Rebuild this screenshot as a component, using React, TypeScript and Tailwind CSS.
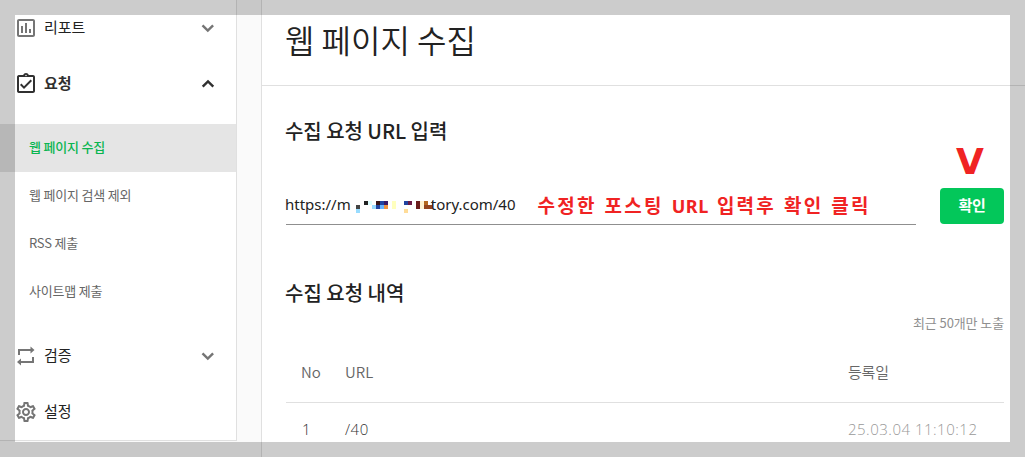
import type React from "react"

import { MdOutlineAssignmentTurnedIn, MdOutlineInsertChart, MdOutlineSettings } from "react-icons/md"

const requestMenu = ["웹 페이지 수집", "웹 페이지 검색 제외", "RSS 제출", "사이트맵 제출"]

// 4px blocks hiding part of the address: x, y, width, height, colour
const mosaic: [number, number, number, number, string][] = [
  [0, 4, 4, 4, "#444444"],
  [0, 8, 4, 4, "#98dcff"],
  [8, 0, 4, 4, "#222222"],
  [12, 0, 4, 4, "#deffff"],
  [16, 4, 4, 4, "#98dcff"],
  [20, 0, 4, 4, "#361616"],
  [20, 4, 4, 4, "#2144a0"],
  [24, 0, 4, 4, "#2144a0"],
  [24, 4, 4, 4, "#66b4ff"],
  [28, 0, 4, 4, "#3a1a68"],
  [28, 4, 4, 4, "#ee9440"],
  [36, 0, 4, 8, "#ffffbe"],
  [48, 0, 4, 4, "#2144a0"],
  [52, 0, 4, 4, "#6b1a44"],
  [48, 8, 4, 4, "#ffdc98"],
  [60, 0, 4, 8, "#6b1c1c"],
  [64, 0, 4, 8, "#fff4d2"],
  [68, 0, 4, 4, "#b4681e"],
  [68, 4, 9, 4, "#94441c"],
  [76, 0, 1, 4, "#94441c"],
]

export default function App() {
  return (
    <div className="relative flex h-[457px] w-[1025px] overflow-hidden bg-white font-['Noto_Sans_CJK_KR',sans-serif] text-[#222]">
      <Sidebar />
      <main className="min-w-0 flex-1">
        <header className="h-[86px] border-b border-[#e0e0e0] px-[23px] pt-[15px]">
          <h1 className="text-[32px] leading-[48px] font-[350]">웹 페이지 수집</h1>
        </header>
        <RequestForm />
        <RequestHistory />
      </main>
      <div className="pointer-events-none absolute inset-0 border-[15px] border-black/20"></div>
    </div>
  )
}

function Sidebar() {
  return (
    <aside className="w-[262px] shrink-0 border-r border-[#e0e0e0] bg-[#fafafa]">
      <nav className="h-[441px] w-[237px] border-r border-b border-[#e0e0e0] bg-white">
        <MenuItem icon={<MdOutlineInsertChart size={24} />} label="리포트" arrow="down" />
        <MenuItem icon={<MdOutlineAssignmentTurnedIn size={24} />} label="요청" arrow="up" active />
        <ul className="py-3">
          {requestMenu.map((label, i) => (
            <li
              key={label}
              className={`flex h-12 items-center pb-[3px] pl-[29px] text-[13px] tracking-[-0.2px] ${
                i === 0 ? "bg-[#e5e5e5] font-medium text-[#0ab550]" : "text-[#666]"
              }`}
            >
              {label}
            </li>
          ))}
        </ul>
        <MenuItem icon={<LoopIcon />} label="검증" arrow="down" />
        <MenuItem icon={<MdOutlineSettings size={24} />} label="설정" />
      </nav>
    </aside>
  )
}

interface MenuItemProps {
  icon: React.ReactNode
  label: string
  arrow?: "up" | "down"
  active?: boolean
}

function MenuItem({ icon, label, arrow, active }: MenuItemProps) {
  return (
    <div className={`flex h-14 items-center pr-4 pl-[14px] ${active ? "text-[#303030]" : "text-[#757575]"}`}>
      {icon}
      <span className={`ml-[6px] flex-1 pb-[2px] text-[15px] leading-5 ${active ? "font-bold" : "text-[#222]"}`}>
        {label}
      </span>
      {arrow && <Chevron up={arrow === "up"} />}
    </div>
  )
}

function Chevron({ up }: { up: boolean }) {
  return (
    <svg width="24" height="24" viewBox="0 0 24 24" fill="none" stroke="currentColor" strokeWidth="2.4">
      <path d={up ? "M6.700 14.700 12 9.400l5.300 5.300" : "M6.500 9.300l5.300 5.300 5.300-5.300"} />
    </svg>
  )
}

function LoopIcon() {
  return (
    <svg width="24" height="24" viewBox="0 0 24 24" fill="currentColor">
      <path d="M4 11V5h12.5V2.500l4 3.500-4 3.500V7H6v4zM20 13v6H7v2.500L3 18l4-3.500V17h11v-4z" />
    </svg>
  )
}

function RequestForm() {
  return (
    <section className="px-[23px] pt-[29px]">
      <h2 className="text-[20px] leading-[31px] font-medium tracking-[-0.05px]">수집 요청 URL 입력</h2>
      <div className="mt-[42px] flex">
        <div className="ml-px flex h-[37px] w-[630px] shrink-0 items-start border-b border-[#8f8f8f] text-[15px] leading-8 whitespace-nowrap">
          <span className="-ml-px font-['Noto_Sans']">https://m</span>
          <Mosaic />
          <span className="-ml-[2px] font-['Noto_Sans']">tory.com/40</span>
          <span className="ml-[22px] text-[19px] leading-[33px] font-bold tracking-[2.2px] text-[#f02323] [word-spacing:1.5px]">
            수정한 포스팅 <span className="font-['Noto_Sans'] text-[18px] tracking-[0.6px]">URL</span> 입력후 확인 클릭
          </span>
        </div>
        <div className="relative ml-6 shrink-0">
          <button className="h-9 w-16 rounded bg-[#03c75a] pb-[2px] text-[15px] font-bold tracking-[-0.4px] text-white">
            확인
          </button>
          <span className="absolute -top-[48px] left-4 font-['DejaVu_Sans',sans-serif] text-[36px] leading-[44px] font-bold text-[#f02323]">
            V
          </span>
        </div>
      </div>
    </section>
  )
}

function Mosaic() {
  return (
    <svg className="mt-[13px] ml-[5px] shrink-0" width="77" height="12" shapeRendering="crispEdges">
      {mosaic.map(([x, y, w, h, fill], i) => (
        <rect key={i} x={x} y={y} width={w} height={h} fill={fill} />
      ))}
    </svg>
  )
}

function RequestHistory() {
  return (
    <section className="pt-[53px] pr-[21px] pl-[23px]">
      <h2 className="text-[20px] leading-[30px] font-medium">수집 요청 내역</h2>
      <p className="mt-[5px] text-right text-[13px] leading-5 tracking-[-0.1px] text-[#8f8f8f]">최근 50개만 노출</p>
      <div className="mt-[11px] ml-px">
        <div className="flex h-[59px] items-center border-b border-[#e0e0e0] pb-px pl-[15px] text-[15px] font-[350] text-[#666]">
          <span className="w-11">No</span>
          <span className="w-[503px]">URL</span>
          <span className="tracking-[-0.2px]">등록일</span>
        </div>
        <div className="flex h-[53px] items-center pb-px pl-4 font-['Open_Sans',sans-serif] text-[15px] font-light tracking-[0.5px] text-[#333]">
          <span className="w-[43px]">1</span>
          <span className="w-[503px]">/40</span>
          <span className="text-[#999]">25.03.04 11:10:12</span>
        </div>
      </div>
    </section>
  )
}
